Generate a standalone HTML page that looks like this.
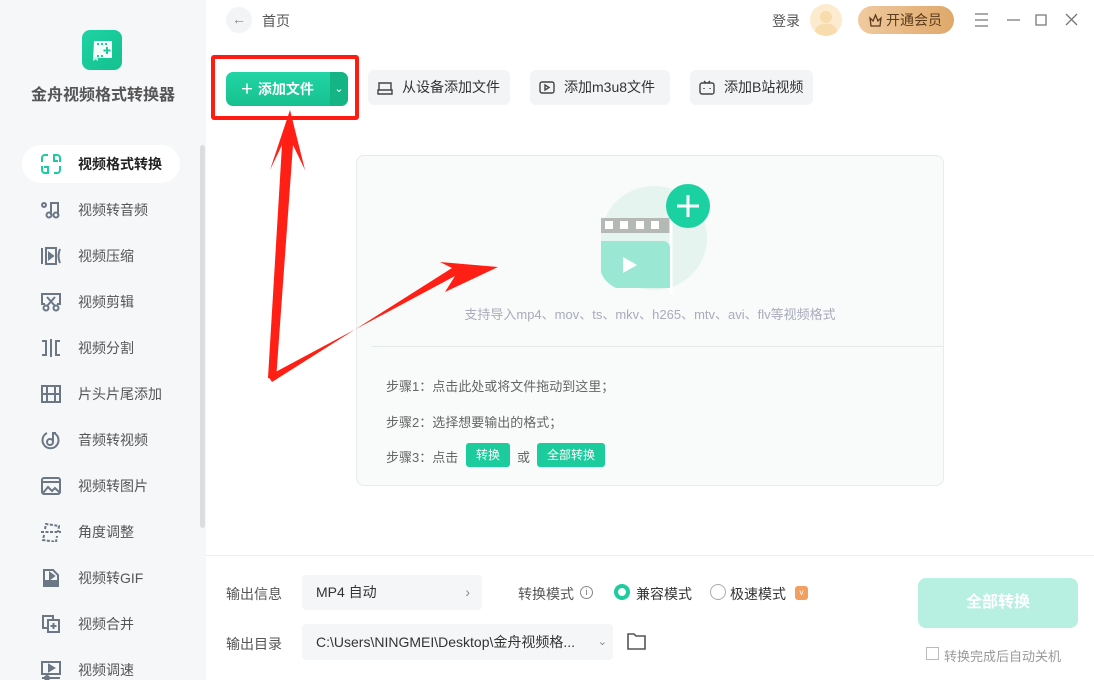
<!DOCTYPE html>
<html><head><meta charset="utf-8"><style>
*{margin:0;padding:0;box-sizing:border-box}
body{width:1094px;height:680px;overflow:hidden;background:#fff;font-family:"Liberation Sans","Noto Sans CJK SC",sans-serif;position:relative;color:#333}
.abs{position:absolute}
#side{left:0;top:0;width:206px;height:680px;background:#f5f7f9}
.item{position:absolute;left:22px;width:158px;height:38px;font-size:14px;color:#555;line-height:38px;padding-left:56px}
.item svg{position:absolute;left:18px;top:9px}
.btn2{position:absolute;top:70px;height:35px;background:#f3f4f6;border-radius:6px;font-size:14px;color:#333;line-height:35px;padding-left:34px}
.btn2 svg{position:absolute;left:9px;top:10px}
</style></head><body>
<div id="side" class="abs">
 <div class="abs" style="left:82px;top:30px;width:40px;height:40px;border-radius:8px;background:linear-gradient(135deg,#1ed3a4,#14c08e)">
  <svg width="40" height="40" viewBox="0 0 40 40"><path d="M12 11h18v17H16l-5 3z" fill="#fff" opacity=".95"/><path d="M11 28l5 3v-4z" fill="#bdf0dd"/><g fill="#1ccc9c"><rect x="15" y="13" width="2" height="2"/><rect x="19" y="13" width="2" height="2"/><rect x="23" y="13" width="2" height="2"/><rect x="15" y="25" width="2" height="2"/><rect x="19" y="25" width="2" height="2"/><rect x="24" y="17" width="2" height="7"/><rect x="21.5" y="19.5" width="7" height="2"/></g></svg>
 </div>
 <div class="abs" style="left:0;width:206px;top:81px;text-align:center;font-size:16px;color:#555;font-weight:bold">金舟视频格式转换器</div>
 <div class="abs" style="left:22px;top:145px;width:158px;height:38px;background:#fff;border-radius:19px"></div>
 <div class="abs" style="left:200px;top:145px;width:5px;height:383px;background:#dcdde0;border-radius:3px"></div>
 <div class="item" style="top:145px;color:#222;font-weight:bold"><svg width="22" height="20" viewBox="0 0 22 20" fill="none" stroke="#1ccc9c" stroke-width="2"><path d="M2 8V4a3 3 0 0 1 3-3h3M2 12v4a3 3 0 0 0 3 3h3v-6H4M20 8V4a3 3 0 0 0-3-3h-3v6h4M20 12v4a3 3 0 0 1-3 3h-3"/></svg>视频格式转换</div>
 <div class="item" style="top:191px"><svg width="22" height="20" viewBox="0 0 22 20" fill="none" stroke="#6b7785" stroke-width="2"><circle cx="4" cy="5" r="2"/><circle cx="9" cy="15" r="2.5"/><path d="M11 15V3h7v12"/><circle cx="16" cy="15" r="2.5"/></svg>视频转音频</div>
 <div class="item" style="top:237px"><svg width="22" height="20" viewBox="0 0 22 20" fill="none" stroke="#6b7785" stroke-width="2"><path d="M2 2v16M6 2h10v16H6z"/><path d="M9 7l4 3-4 3z" fill="#6b7785"/><path d="M20 3q-3 7 0 14"/></svg>视频压缩</div>
 <div class="item" style="top:283px"><svg width="22" height="20" viewBox="0 0 22 20" fill="none" stroke="#6b7785" stroke-width="2"><path d="M5 12H2V2h18v10h-3"/><circle cx="6" cy="16" r="2.5"/><circle cx="16" cy="16" r="2.5"/><path d="M7 14l8-9M15 14L7 5"/></svg>视频剪辑</div>
 <div class="item" style="top:329px"><svg width="22" height="20" viewBox="0 0 22 20" fill="none" stroke="#6b7785" stroke-width="2"><path d="M2 3h4v14H2M20 3h-4v14h4M11 1v18"/></svg>视频分割</div>
 <div class="item" style="top:375px"><svg width="22" height="20" viewBox="0 0 22 20" fill="none" stroke="#6b7785" stroke-width="2"><rect x="2" y="2" width="18" height="16"/><path d="M7 2v16M15 2v16M2 10h18"/></svg>片头片尾添加</div>
 <div class="item" style="top:421px"><svg width="22" height="20" viewBox="0 0 22 20" fill="none" stroke="#6b7785" stroke-width="2"><path d="M7 3a8 8 0 1 0 7 0"/><circle cx="10" cy="12" r="3"/><path d="M13 12V3h3"/></svg>音频转视频</div>
 <div class="item" style="top:467px"><svg width="22" height="20" viewBox="0 0 22 20" fill="none" stroke="#6b7785" stroke-width="2"><rect x="2" y="2" width="18" height="16" rx="2"/><path d="M2 6h18M3 17l5-6 4 4 3-3 5 5"/></svg>视频转图片</div>
 <div class="item" style="top:513px"><svg width="22" height="20" viewBox="0 0 22 20" fill="none" stroke="#6b7785" stroke-width="2"><path d="M5 7l1-5 13 2-1 6M4 13l-1 5 13 2 1-6M1 10h20" stroke-dasharray="3 1.5"/></svg>角度调整</div>
 <div class="item" style="top:559px"><svg width="22" height="20" viewBox="0 0 22 20" fill="none" stroke="#6b7785" stroke-width="2"><path d="M4 18V2h9l5 5v11z"/><path d="M10 5l4 3-4 3z" fill="#6b7785"/><rect x="5" y="13" width="12" height="5" fill="#6b7785"/></svg>视频转GIF</div>
 <div class="item" style="top:605px"><svg width="22" height="20" viewBox="0 0 22 20" fill="none" stroke="#6b7785" stroke-width="2"><path d="M13 5V2H3v12h4"/><rect x="8" y="6" width="11" height="12"/><path d="M13.5 9v6M10.5 12h6"/></svg>视频合并</div>
 <div class="item" style="top:651px"><svg width="22" height="20" viewBox="0 0 22 20" fill="none" stroke="#6b7785" stroke-width="2"><rect x="2" y="2" width="18" height="12"/><path d="M9 5l5 3-5 3z" fill="#6b7785"/><path d="M2 18h18"/><circle cx="7" cy="18" r="2" fill="#6b7785"/></svg>视频调速</div>
</div>

<!-- top bar -->
<div class="abs" style="left:226px;top:7px;width:26px;height:26px;border-radius:13px;background:#f3f4f6;text-align:center;line-height:25px;color:#888;font-size:14px">←</div>
<div class="abs" style="left:262px;top:11px;font-size:14px;color:#555">首页</div>
<div class="abs" style="left:772px;top:11px;font-size:14px;color:#555">登录</div>
<div class="abs" style="left:810px;top:4px;width:32px;height:32px;border-radius:16px;background:#fdebd0;overflow:hidden"><div class="abs" style="left:10px;top:7px;width:12px;height:12px;border-radius:6px;background:#f8dcae"></div><div class="abs" style="left:5px;top:20px;width:22px;height:16px;border-radius:11px;background:#f8dcae"></div></div>
<div class="abs" style="left:858px;top:6px;width:96px;height:28px;border-radius:14px;background:linear-gradient(90deg,#f0caa0,#dfa86a);font-size:14px;color:#5a3a1a;line-height:28px;padding-left:28px">开通会员<svg class="abs" style="left:10px;top:7px" width="15" height="14" viewBox="0 0 15 14" fill="none" stroke="#5a3a1a" stroke-width="1.3"><path d="M2 5l3 3 2.5-6L10 8l3-3-1 8H3z"/></svg></div>
<svg class="abs" style="left:974px;top:13px" width="110" height="16" fill="none" stroke="#777" stroke-width="1.3"><path d="M1 1h13M1 7h13M1 13h13M33 7h13M62 2h10v10H62zM92 1l11 11M103 1L92 12"/></svg>

<!-- buttons -->
<div class="abs" style="left:226px;top:72px;width:122px;height:34px;border-radius:7px;background:linear-gradient(180deg,#22d4a5,#17c18f);color:#fff;font-size:14px;font-weight:bold;line-height:34px;padding-left:14px">＋ 添加文件</div>
<div class="abs" style="left:330px;top:72px;width:18px;height:34px;border-radius:0 7px 7px 0;background:#14b484;color:#fff;font-size:11px;line-height:34px;text-align:center">⌄</div>
<div class="abs" style="left:211px;top:55px;width:148px;height:65px;border:4px solid #ff1a12;border-radius:3px"></div>
<div class="btn2" style="left:368px;width:142px"><svg width="16" height="16" viewBox="0 0 16 16" fill="none" stroke="#444" stroke-width="1.4"><path d="M2 10V3h12v7M1 10h14v4H1z"/></svg>从设备添加文件</div>
<div class="btn2" style="left:530px;width:140px"><svg width="16" height="16" viewBox="0 0 16 16" fill="none" stroke="#444" stroke-width="1.4"><rect x="1" y="2" width="14" height="11" rx="2"/><path d="M6 5l4 2.5L6 10z"/></svg>添加m3u8文件</div>
<div class="btn2" style="left:690px;width:123px"><svg width="16" height="16" viewBox="0 0 16 16" fill="none" stroke="#444" stroke-width="1.4"><rect x="1" y="3" width="14" height="11" rx="2"/><path d="M5 1l2 2M11 1L9 3M5 8v1M11 8v1"/></svg>添加B站视频</div>

<!-- drop area -->
<div class="abs" style="left:356px;top:155px;width:588px;height:331px;border:1px solid #e6ecea;border-radius:8px;background:#f8fbfa"></div>
<div class="abs" style="left:372px;top:346px;width:571px;height:1px;background:#e3e9e8"></div>
<svg class="abs" style="left:598px;top:182px" width="116" height="112" viewBox="0 0 116 112"><ellipse cx="56" cy="56" rx="53" ry="52" fill="#e5f4ef"/><rect x="3" y="36" width="70" height="15" fill="#b5b9b6"/><g fill="#fff"><rect x="7" y="39" width="8" height="8"/><rect x="22" y="39" width="8" height="8"/><rect x="38" y="39" width="8" height="8"/><rect x="53" y="39" width="8" height="8"/></g><path d="M73 36v76" stroke="#fff" stroke-width="3"/><path d="M3 59h62a7 7 0 0 1 7 7v40H18Q6 100 3 90z" fill="#9ae8d3"/><path d="M25 75l14 8-14 8z" fill="#fff"/><circle cx="90" cy="24" r="22" fill="#1bd0a1"/><path d="M90 13v22M79 24h22" stroke="#fff" stroke-width="3"/></svg>
<div class="abs" style="left:356px;width:588px;top:304px;text-align:center;font-size:13px;color:#aab">支持导入mp4、mov、ts、mkv、h265、mtv、avi、flv等视频格式</div>
<div class="abs" style="left:386px;top:376px;font-size:13px;color:#666">步骤1：点击此处或将文件拖动到这里；</div>
<div class="abs" style="left:386px;top:412px;font-size:13px;color:#666">步骤2：选择想要输出的格式；</div>
<div class="abs" style="left:386px;top:447px;font-size:13px;color:#666">步骤3：点击</div>
<div class="abs" style="left:466px;top:443px;width:44px;height:24px;border-radius:3px;background:#1ccc9c;color:#fff;font-size:12px;line-height:24px;text-align:center">转换</div>
<div class="abs" style="left:517px;top:447px;font-size:13px;color:#666">或</div>
<div class="abs" style="left:537px;top:443px;width:68px;height:24px;border-radius:3px;background:#1ccc9c;color:#fff;font-size:12px;line-height:24px;text-align:center">全部转换</div>

<!-- arrows -->
<svg class="abs" style="left:0;top:0" width="1094" height="680"><polygon points="268,378 282,145 270,170 290,110 305,170 293,145 276,380" fill="#ff1f14"/><polygon points="268,376 455,276 445,292 498,267 440,262 452,268 272,382" fill="#ff1f14"/></svg>

<!-- bottom -->
<div class="abs" style="left:206px;top:555px;width:888px;height:1px;background:#eceef0"></div>
<div class="abs" style="left:226px;top:584px;font-size:14px;color:#555">输出信息</div>
<div class="abs" style="left:302px;top:575px;width:180px;height:35px;background:#f5f6f7;border-radius:4px;font-size:14px;color:#333;line-height:35px;padding-left:14px">MP4 自动<span style="position:absolute;right:12px;color:#888">›</span></div>
<div class="abs" style="left:226px;top:634px;font-size:14px;color:#555">输出目录</div>
<div class="abs" style="left:302px;top:624px;width:311px;height:36px;background:#f5f6f7;border-radius:4px;font-size:14px;color:#333;line-height:36px;padding-left:14px">C:\Users\NINGMEI\Desktop\金舟视频格...<span style="position:absolute;right:6px;color:#888;font-size:11px">⌄</span></div>
<svg class="abs" style="left:626px;top:631px" width="22" height="20" fill="none" stroke="#555" stroke-width="1.6"><path d="M2 3h6l2 2h9v13H2z"/></svg>
<div class="abs" style="left:518px;top:584px;font-size:14px;color:#555">转换模式</div>
<div class="abs" style="left:580px;top:586px;width:13px;height:13px;border:1px solid #888;border-radius:7px;font-size:9px;line-height:11px;text-align:center;color:#777">i</div>
<div class="abs" style="left:614px;top:584px;width:16px;height:16px;border:4px solid #1ccc9c;border-radius:8px"></div>
<div class="abs" style="left:636px;top:584px;font-size:14px;color:#333">兼容模式</div>
<div class="abs" style="left:710px;top:584px;width:16px;height:16px;border:1px solid #aaa;border-radius:8px"></div>
<div class="abs" style="left:730px;top:584px;font-size:14px;color:#333">极速模式</div>
<div class="abs" style="left:795px;top:586px;width:13px;height:14px;background:#f0a060;border-radius:3px;color:#fff;font-size:8px;text-align:center;line-height:14px">v</div>
<div class="abs" style="left:918px;top:578px;width:160px;height:50px;border-radius:8px;background:#b7efe0;color:#fff;font-size:16px;font-weight:bold;line-height:50px;text-align:center">全部转换</div>
<div class="abs" style="left:926px;top:647px;width:13px;height:13px;border:1px solid #bbb"></div>
<div class="abs" style="left:944px;top:646px;font-size:13px;color:#999">转换完成后自动关机</div>
</body></html>
